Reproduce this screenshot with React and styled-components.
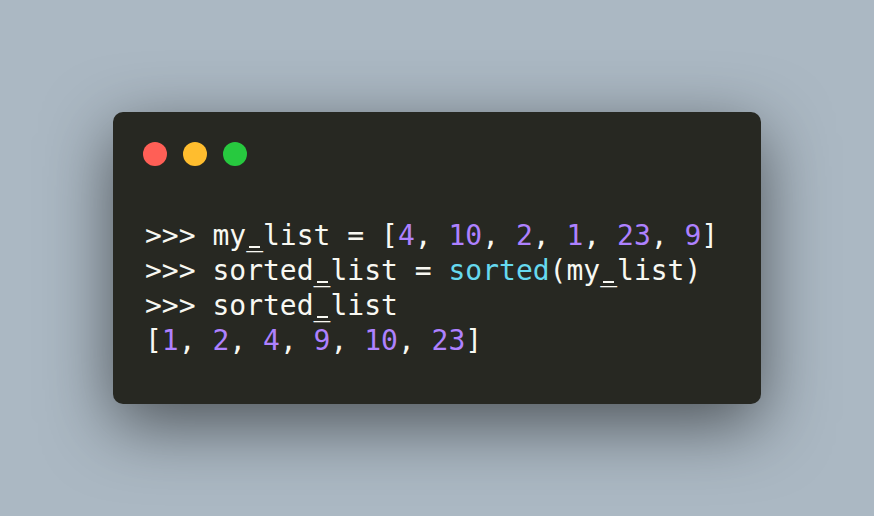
import React from "react";
import styled, { createGlobalStyle } from "styled-components";

const Global = createGlobalStyle`
  html, body { margin: 0; padding: 0; }
  body { background: #abb8c3; }
`;

const Stage = styled.div`
  width: 874px;
  height: 516px;
  box-sizing: border-box;
  background: #abb8c3;
  display: flex;
  align-items: center;
  justify-content: center;
`;

const Window = styled.div`
  width: 648px;
  height: 292px;
  box-sizing: border-box;
  background: #272822;
  border-radius: 10px;
  box-shadow: 0 20px 68px rgba(0, 0, 0, 0.55);
  padding: 30px 32px 0 30px;
  display: flex;
  flex-direction: column;
`;

const Dots = styled.div`
  display: flex;
  gap: 16px;
  height: 24px;
`;

const Dot = styled.span`
  width: 24px;
  height: 24px;
  border-radius: 50%;
  background: ${(p) => p.$c};
`;

const Code = styled.div`
  margin: 52px 0 0 2px;
  font-family: "DejaVu Sans Mono", monospace;
  font-size: 28px;
  color: #f8f8f2;
  display: flex;
  flex-direction: column;
`;

const Line = styled.div`
  height: 35px;
  line-height: 35px;
  white-space: pre;
`;

const Under = styled.span`
  position: relative;
  &::after {
    content: "";
    position: absolute;
    left: 3px;
    top: 27px;
    width: 11px;
    height: 2px;
    background: currentColor;
  }
`;

const Num = styled.span`
  color: #ae81ff;
`;
const Fn = styled.span`
  color: #66d9ef;
`;

const U = () => <Under>_</Under>;

export default function App() {
  return (
    <>
      <Global />
      <Stage>
        <Window>
          <Dots>
            <Dot $c="#ff5f56" />
            <Dot $c="#ffbd2e" />
            <Dot $c="#27c93f" />
          </Dots>
          <Code>
            <Line>
              {">>> my"}<U />{"list = ["}
              <Num>4</Num>, <Num>10</Num>, <Num>2</Num>, <Num>1</Num>, <Num>23</Num>, <Num>9</Num>
              {"]"}
            </Line>
            <Line>
              {">>> sorted"}<U />{"list = "}
              <Fn>sorted</Fn>
              {"(my"}<U />{"list)"}
            </Line>
            <Line>{">>> sorted"}<U />{"list"}</Line>
            <Line>
              {"["}
              <Num>1</Num>, <Num>2</Num>, <Num>4</Num>, <Num>9</Num>, <Num>10</Num>, <Num>23</Num>
              {"]"}
            </Line>
          </Code>
        </Window>
      </Stage>
    </>
  );
}
